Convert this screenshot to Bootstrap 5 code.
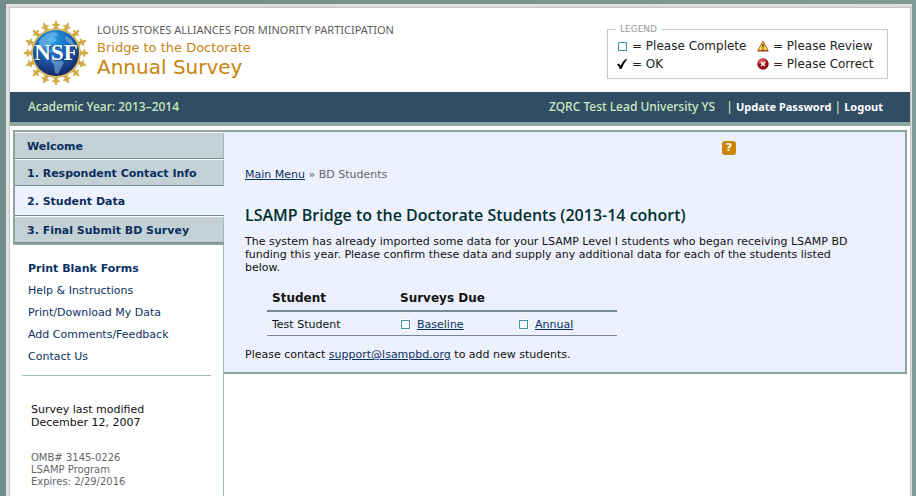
<!DOCTYPE html>
<html lang="en">
<head>
<meta charset="utf-8">
<meta name="viewport" content="width=device-width, initial-scale=1">
<title>Bridge to the Doctorate Annual Survey</title>
<link href="https://cdn.jsdelivr.net/npm/bootstrap@5.3.0/dist/css/bootstrap.min.css" rel="stylesheet">
<script src="https://cdn.jsdelivr.net/npm/bootstrap@5.3.0/dist/js/bootstrap.bundle.min.js" defer></script>
<style>
body { background: linear-gradient(90deg, #728c87, #809b95); color: #111; font: 11px/13px "DejaVu Sans", Verdana, sans-serif; padding: 4px 4px 0 6px; }
a { color: #0a3161; }
.shell { background: #fff; border: solid #e0dfdf; border-width: 3px 1px 0 3px; min-height: calc(100vh - 4px); }
.sheet { border: 1px solid #c4c4c4; border-bottom: 0; min-height: calc(100vh - 7px); }
.masthead { min-height: 84px; }
.logo { width: 68px; height: 64px; margin: 13px 7px 0 12px; }
.org { font-size: 11px; line-height: 12px; color: #5c5c5c; font-family: "Noto Sans", sans-serif; }
.program { font-size: 13px; line-height: 20px; padding-top: 2px; color: #c88415; }
.title { font-size: 20px; line-height: 18px; color: #c8830a; font-weight: 400; }
.legend-box { border: 1px solid #c8c8c8; width: 281px; height: 56px; margin-top: 15px; margin-right: 22px; padding: 0 8px; color: #222; }
.legend-box legend { float: none; width: auto; font-size: 9px; line-height: 12px; color: #999; padding: 0 4px; margin: 0; height: 12px; }
.legend-grid { display: grid; grid-template-columns: 141px 1fr; row-gap: 4px; padding-top: 4px; line-height: 14px; font-size: 12px; white-space: nowrap; }
.legend-grid svg { width: 12px; height: 12px; flex: none; }
.userbar { background: #304d63; border-bottom: 4px solid #8ca7a2; color: #cfeac2; min-height: 34px; padding: 0 27px 0 18px; font: 500 12px/16px "Noto Sans", "DejaVu Sans", sans-serif; }
.userbar a { color: #fff; font-weight: 700; font-size: 11px; }
.work { padding: 4px 3px 0; }
.side { width: 211px; min-height: 366px; }
.steps { border: solid #8ca7a2; border-width: 2px 0 2px 2px; }
.steps a { display: flex; align-items: center; height: 27px; padding-left: 12px; padding-top: 1px; color: #0a2f5c; font-weight: 700; background: #c3d0d6; border: solid #768d8c; border-width: 1px 0; border-top-color: #fff; box-shadow: inset -1px 0 #a3bbb8; text-decoration: none; }
.steps a.current { height: 30px; background: #edf1fe; border-top-color: #edf1fe; box-shadow: none; }
.extras { border-right: 1px solid #a3bbb8; padding: 13px 12px 0 9px; }
.extras .links { border-bottom: 1px solid #a3bbb8; padding: 0 6px 7px; }
.links a { line-height: 22px; text-decoration: none; }
.modified { padding: 27px 9px 0; }
.omb { padding: 23px 9px 0; font-size: 10px; line-height: 12px; color: #666; }
.panel { background: #edf1fe; border: solid #8ca7a2; border-width: 2px 2px 2px 0; padding: 9px 30px 11px 21px; min-width: 0; }
.help { width: 14px; height: 14px; border: 0; border-radius: 3px; background: #c98503; color: #fff; font-size: 11px; font-weight: 700; line-height: 14px; padding: 0; margin-right: 139px; }
.crumbs { color: #666; margin-top: 13px; }
.intro { max-width: 615px; }
h2 { font: 600 16px/20px "Open Sans", sans-serif; color: #00302f; margin: 24px 0 10px; }
.due { width: 350px; margin: 14px 0 12px 22px; }
.due th { font-size: 12px; line-height: 16px; padding: 2px 5px 4px; border-bottom: 2px solid #788896; }
.due td { padding: 6px 5px 3px; line-height: 14px; border-bottom: 1px solid #788896; }
.pending { width: 9px; height: 9px; background: #fff; border: 1px solid #3f93a1; outline: 1px solid #fff; display: inline-block; margin: 0 7px 1px 1px; vertical-align: middle; }
</style>
</head>
<body>
<div class="shell"><div class="sheet">
  <header class="masthead d-flex justify-content-between">
    <div class="d-flex">
      <svg class="logo flex-shrink-0" viewBox="0 0 68 64" role="img" aria-label="NSF">
        <defs>
          <radialGradient id="globe" cx="42%" cy="20%" r="80%"><stop offset="0" stop-color="#25a3e6"/><stop offset=".45" stop-color="#1a67b8"/><stop offset="1" stop-color="#162868"/></radialGradient>
          <path id="ray" d="M34-.5l1.200 1.600-.5 1.400 3 .9-.3 1-2.300.4.700 2.200 3.200 1.500v1.500H29V8.500L32.200 7l.7-2.200-2.300-.4-.3-1 3-.9-.5-1.400z"/>
        </defs>
        <g fill="#d2aa3a" stroke="#b88d24" stroke-width=".3">
          <use href="#ray"/><use href="#ray" transform="rotate(22.500 34 32)"/><use href="#ray" transform="rotate(45 34 32)"/><use href="#ray" transform="rotate(67.500 34 32)"/><use href="#ray" transform="rotate(90 34 32)"/><use href="#ray" transform="rotate(112.500 34 32)"/><use href="#ray" transform="rotate(135 34 32)"/><use href="#ray" transform="rotate(157.500 34 32)"/><use href="#ray" transform="rotate(180 34 32)"/><use href="#ray" transform="rotate(202.500 34 32)"/><use href="#ray" transform="rotate(225 34 32)"/><use href="#ray" transform="rotate(247.500 34 32)"/><use href="#ray" transform="rotate(270 34 32)"/><use href="#ray" transform="rotate(292.500 34 32)"/><use href="#ray" transform="rotate(315 34 32)"/><use href="#ray" transform="rotate(337.500 34 32)"/>
        </g>
        <circle cx="34" cy="32" r="24.500" fill="#dcbc62"/>
        <circle cx="34" cy="32" r="23" fill="url(#globe)"/>
        <path d="M17 20q7-9 16-9l4 3-5 2 3 3-6 4-2 5 4 3-4 1-5-6-4 1zM30 36l7 1 5 5-3 5-3 6-3-1-1-8-3-4zM43 15l6 3 4 7-5-2-4-3z" fill="#8fc8ee" opacity=".5"/>
        <text x="35" y="40" text-anchor="middle" font-family="Liberation Serif, serif" font-weight="700" font-size="23" fill="#123a7a" opacity=".7">NSF</text>
        <text x="34" y="39" text-anchor="middle" font-family="Liberation Serif, serif" font-weight="700" font-size="23" fill="#fff">NSF</text>
      </svg>
      <div class="pt-3">
        <div class="org">LOUIS STOKES ALLIANCES FOR MINORITY PARTICIPATION</div>
        <div class="program">Bridge to the Doctorate</div>
        <h1 class="title mb-0">Annual Survey</h1>
      </div>
    </div>
    <fieldset class="legend-box">
      <legend>LEGEND</legend>
      <div class="legend-grid">
        <div class="d-flex align-items-center gap-1"><svg viewBox="0 0 12 12"><path d="M2.500 2.500h8v8h-8z" fill="#fff" stroke="#3f93a1"/></svg>= Please Complete</div>
        <div class="d-flex align-items-center gap-1"><svg viewBox="0 0 12 12"><path d="M6 1L11 10.500H1z" fill="#f8dc38" stroke="#b65320" stroke-linejoin="round"/><path d="M.5 11h11" stroke="#a23b1d"/><path d="M6 4v3.500M6 8.500v1.200" stroke="#462b12" stroke-width="1.300"/></svg>= Please Review</div>
        <div class="d-flex align-items-center gap-1"><svg viewBox="0 0 12 12"><path d="M1 6.500l2-1 1.500 2.300Q7 3 10 .8l1 .4Q8 5 5.500 11H3.800Q3 8.500 1 6.500z" fill="#000"/></svg>= OK</div>
        <div class="d-flex align-items-center gap-1"><svg viewBox="0 0 12 12"><circle cx="6" cy="6" r="5.700" fill="#8e1018"/><ellipse cx="5" cy="3.500" rx="4" ry="2.500" fill="#d4545a"/><path d="M4 4l4 4M8 4L4 8" stroke="#fff" stroke-width="1.500"/></svg>= Please Correct</div>
      </div>
    </fieldset>
  </header>
  <div class="userbar d-flex align-items-center justify-content-between">
    <span>Academic Year: 2013–2014</span>
    <span><span class="me-2">ZQRC Test Lead University YS</span> | <a class="text-decoration-none" href="#">Update Password</a> | <a class="text-decoration-none" href="#">Logout</a></span>
  </div>
  <div class="d-flex align-items-start work">
    <aside class="side flex-shrink-0 d-flex flex-column">
      <nav class="steps">
        <a href="#">Welcome</a>
        <a href="#">1. Respondent Contact Info</a>
        <a class="current" href="#" aria-current="page">2. Student Data</a>
        <a href="#">3. Final Submit BD Survey</a>
      </nav>
      <div class="extras flex-grow-1">
        <nav class="links d-flex flex-column">
          <a class="fw-bold" href="#">Print Blank Forms</a>
          <a href="#">Help &amp; Instructions</a>
          <a href="#">Print/Download My Data</a>
          <a href="#">Add Comments/Feedback</a>
          <a href="#">Contact Us</a>
        </nav>
        <div class="modified">Survey last modified<br>December 12, 2007</div>
        <div class="omb">OMB# 3145-0226<br>LSAMP Program<br>Expires: 2/29/2016</div>
      </div>
    </aside>
    <main class="panel flex-grow-1">
      <div class="d-flex justify-content-end"><button class="help" type="button" aria-label="Help">?</button></div>
      <nav class="crumbs" aria-label="Breadcrumb"><a href="#">Main Menu</a> » BD Students</nav>
      <h2>LSAMP Bridge to the Doctorate Students (2013-14 cohort)</h2>
      <p class="intro mb-0">The system has already imported some data for your LSAMP Level I students who began receiving LSAMP BD funding this year. Please confirm these data and supply any additional data for each of the students listed below.</p>
      <table class="due">
        <colgroup><col style="width:128px"><col style="width:118px"><col></colgroup>
        <thead><tr><th scope="col">Student</th><th scope="col" colspan="2">Surveys Due</th></tr></thead>
        <tbody><tr><td>Test Student</td><td><span class="pending"></span><a href="#">Baseline</a></td><td><span class="pending"></span><a href="#">Annual</a></td></tr></tbody>
      </table>
      <p class="mb-0">Please contact <a href="#">support@lsampbd.org</a> to add new students.</p>
    </main>
  </div>
</div></div>
</body>
</html>
